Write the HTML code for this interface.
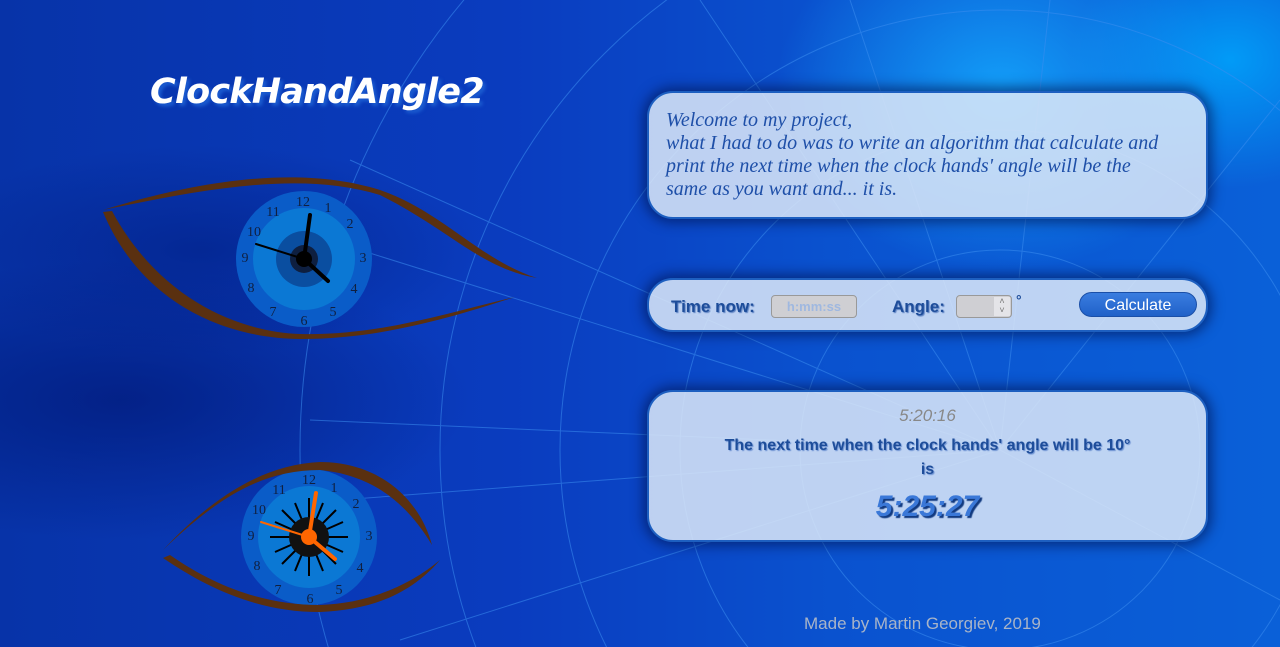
<!DOCTYPE html>
<html><head><meta charset="utf-8"><style>
html,body{margin:0;padding:0;width:1280px;height:647px;overflow:hidden;}
body{position:relative;font-family:"Liberation Sans",sans-serif;
background:
radial-gradient(ellipse 320px 260px at 1000px 90px, rgba(20,170,255,.85), rgba(20,170,255,0) 70%),
radial-gradient(ellipse 200px 160px at 1230px 60px, rgba(0,170,255,.8), rgba(0,170,255,0) 80%),
radial-gradient(ellipse 500px 200px at 120px 400px, rgba(0,20,110,.6), rgba(0,20,110,0) 70%),
radial-gradient(ellipse 400px 150px at 200px 250px, rgba(0,25,120,.5), rgba(0,25,120,0) 70%),
linear-gradient(90deg,#0733a8 0%,#0a3cbf 40%,#0a52cf 65%,#0a60d8 100%);}
.title{position:absolute;left:150px;top:72px;font-family:"DejaVu Sans",sans-serif;font-weight:bold;font-style:italic;font-size:35px;color:#fff;text-shadow:3px 3px 3px #1b5bd0;letter-spacing:-0.8px}
.box{position:absolute;left:647px;width:561px;border:2px solid #1d5fc0;border-radius:26px;background:rgba(220,232,248,.86);box-shadow:0 0 12px 4px rgba(0,20,80,.6);box-sizing:border-box}
.b1{top:91px;height:128px;padding:16px 30px 16px 17px;font-family:"Liberation Serif",serif;font-style:italic;font-size:20px;line-height:23px;color:#1e4fa8}
.b2{top:278px;height:54px}
.b3{top:390px;height:152px;text-align:center}
.lbl{position:absolute;top:17px;font-weight:bold;font-size:17px;color:#1e4d9a;text-shadow:1px 1px 1px #5a7fc0}
.inp{position:absolute;top:15px;height:23px;border:1px solid #999;border-radius:4px;background:#cfcfd3;box-sizing:border-box}
.btn{position:absolute;left:430px;top:12px;width:118px;height:25px;border-radius:14px;background:linear-gradient(#3a7de0,#2061c8);border:1px solid #1a4fa8;color:#fff;font-size:16px;text-align:center;line-height:25px;box-sizing:border-box}
.foot{position:absolute;left:804px;top:614px;color:#a8b4c8;font-size:17px;white-space:nowrap}
</style></head><body>
<svg width="1280" height="647" style="position:absolute;left:0;top:0;display:block">
<g stroke="#3c8ef0" stroke-width="1" fill="none" opacity=".55">
<circle cx="1000" cy="450" r="700"/><circle cx="1000" cy="450" r="560"/><circle cx="1000" cy="450" r="440"/><circle cx="1000" cy="450" r="320"/><circle cx="1000" cy="450" r="200"/>
<line x1="1000" y1="450" x2="350" y2="160"/><line x1="1000" y1="450" x2="360" y2="250"/><line x1="1000" y1="450" x2="310" y2="420"/><line x1="1000" y1="450" x2="340" y2="500"/><line x1="1000" y1="450" x2="400" y2="640"/><line x1="1000" y1="450" x2="700" y2="0"/><line x1="1000" y1="450" x2="1280" y2="100"/><line x1="1000" y1="450" x2="1280" y2="600"/><line x1="1000" y1="450" x2="850" y2="0"/><line x1="1000" y1="450" x2="1050" y2="0"/>
</g>
<circle cx="304" cy="259" r="68" fill="#0a5cc8"/><circle cx="304" cy="259" r="51" fill="#0b78d4"/>
<circle cx="304" cy="259" r="28" fill="#0a3c8a" opacity=".7"/><circle cx="304" cy="259" r="14" fill="#0e1f40"/>
<g font-family="Liberation Serif" font-size="14" fill="#102040" text-anchor="middle">
<text x="303" y="206">12</text><text x="328" y="212">1</text><text x="350" y="228">2</text><text x="363" y="262">3</text><text x="354" y="293">4</text><text x="333" y="316">5</text><text x="304" y="325">6</text><text x="273" y="316">7</text><text x="251" y="292">8</text><text x="245" y="262">9</text><text x="254" y="236">10</text><text x="273" y="216">11</text></g>
<g stroke="#000" stroke-linecap="round"><line x1="304" y1="259" x2="310" y2="215" stroke-width="4"/><line x1="304" y1="259" x2="256" y2="244" stroke-width="2"/><line x1="304" y1="259" x2="328" y2="281" stroke-width="4"/></g>
<circle cx="304" cy="259" r="8" fill="#000"/>
<path d="M103 210 C200 180 300 165 380 190 C440 210 480 260 537 278 C480 268 450 230 380 195 C300 170 200 190 103 210Z" fill="#5a3010"/>
<path d="M103 212 L112 211 C160 300 240 332 300 334 C380 336 450 312 515 297 C450 318 380 339 300 339 C220 338 140 300 103 212Z" fill="#5a3010"/>
<circle cx="309" cy="537" r="68" fill="#0a5cc8"/><circle cx="309" cy="537" r="51" fill="#0b78d4"/>
<g stroke="#000" stroke-width="2"><line x1="270" y1="537" x2="348" y2="537"/><line x1="309" y1="498" x2="309" y2="576"/><line x1="282" y1="510" x2="336" y2="564"/><line x1="336" y1="510" x2="282" y2="564"/><line x1="275" y1="522" x2="343" y2="552"/><line x1="275" y1="552" x2="343" y2="522"/><line x1="295" y1="503" x2="323" y2="571"/><line x1="323" y1="503" x2="295" y2="571"/></g>
<circle cx="309" cy="537" r="20" fill="#111"/>
<g font-family="Liberation Serif" font-size="14" fill="#102040" text-anchor="middle">
<text x="309" y="484">12</text><text x="334" y="492">1</text><text x="356" y="508">2</text><text x="369" y="540">3</text><text x="360" y="572">4</text><text x="339" y="594">5</text><text x="310" y="603">6</text><text x="278" y="594">7</text><text x="257" y="570">8</text><text x="251" y="540">9</text><text x="259" y="514">10</text><text x="279" y="494">11</text></g>
<g stroke="#ff6600" stroke-linecap="round"><line x1="309" y1="537" x2="316" y2="493" stroke-width="4"/><line x1="309" y1="537" x2="261" y2="522" stroke-width="2"/><line x1="309" y1="537" x2="335" y2="559" stroke-width="4"/></g>
<circle cx="309" cy="537" r="8" fill="#ff6600"/>
<path d="M163 550 C210 500 260 465 320 462 C380 462 420 500 432 545 C405 500 370 475 320 470 C260 470 215 500 163 550Z" fill="#5a3010"/>
<path d="M163 558 L170 555 C220 590 270 605 320 605 C370 603 410 585 440 560 C410 595 370 610 320 612 C260 612 210 590 163 558Z" fill="#5a3010"/>
</svg>
<div class="title">ClockHandAngle2</div>
<div class="box b1">Welcome to my project,<br>what I had to do was to write an algorithm that calculate and print the next time when the clock hands' angle will be the same as you want and... it is.</div>
<div class="box b2">
<div class="lbl" style="left:22px">Time now:</div>
<div class="inp" style="left:122px;width:86px;color:#9fb8e0;font-size:13px;font-weight:bold;text-align:center;line-height:21px">h:mm:ss</div>
<div class="lbl" style="left:243px">Angle:</div>
<div class="inp" style="left:307px;width:56px"><div style="position:absolute;right:1px;top:1px;width:16px;height:19px;background:#e4e4e8;font-size:9px;color:#777;text-align:center;line-height:9px">˄<br>˅</div></div>
<div style="position:absolute;left:367px;top:12px;color:#1e4d9a;font-weight:bold;font-size:14px">°</div>
<div class="btn">Calculate</div>
</div>
<div class="box b3">
<div style="margin-top:14px;color:#888;font-style:italic;font-size:17px">5:20:16</div>
<div style="margin-top:8px;color:#1e4d9a;font-weight:bold;font-size:16px;line-height:24px;text-shadow:1px 1px 1px #6a8fd0">The next time when the clock hands' angle will be 10°<br>is</div>
<div style="margin-top:8px;color:#3a78d8;font-weight:bold;font-style:italic;font-size:30px;text-shadow:2px 2px 1px #123a80">5:25:27</div>
</div>
<div class="foot">Made by Martin Georgiev, 2019</div>
</body></html>
